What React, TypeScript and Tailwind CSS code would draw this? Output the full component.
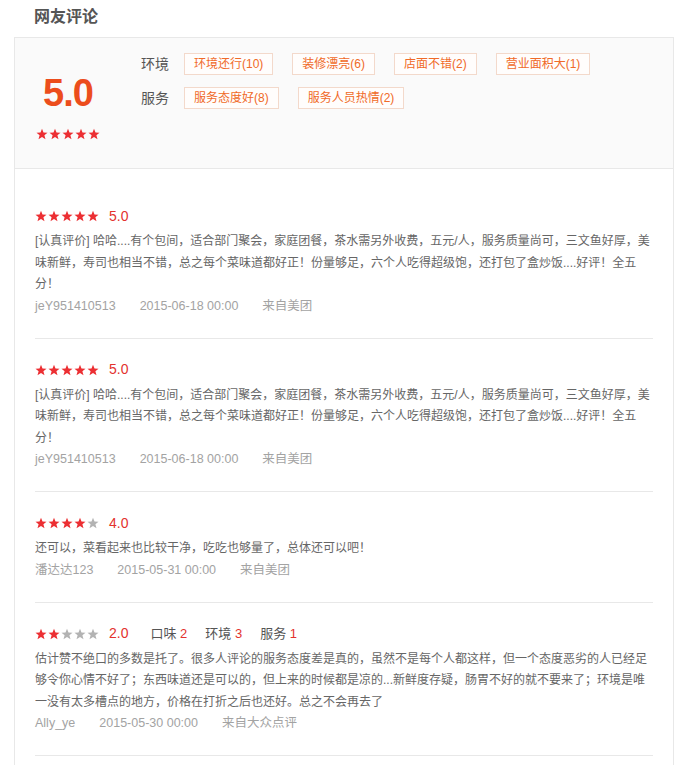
const FONT = '"Liberation Sans", "Noto Sans CJK SC", sans-serif'

type TReview = {
  score: number
  text: string
  user: string
  time: string
  source: string
  dims?: { label: string; value: number }[]
}

const tagRows = [
  { label: "环境", tags: ["环境还行(10)", "装修漂亮(6)", "店面不错(2)", "营业面积大(1)"] },
  { label: "服务", tags: ["服务态度好(8)", "服务人员热情(2)"] },
]

const longText =
  "[认真评价] 哈哈....有个包间，适合部门聚会，家庭团餐，茶水需另外收费，五元/人，服务质量尚可，三文鱼好厚，美味新鲜，寿司也相当不错，总之每个菜味道都好正！份量够足，六个人吃得超级饱，还打包了盒炒饭....好评！全五分！"

const reviews: TReview[] = [
  { score: 5, text: longText, user: "jeY951410513", time: "2015-06-18 00:00", source: "来自美团" },
  { score: 5, text: longText, user: "jeY951410513", time: "2015-06-18 00:00", source: "来自美团" },
  {
    score: 4,
    text: "还可以，菜看起来也比较干净，吃吃也够量了，总体还可以吧！",
    user: "潘达达123",
    time: "2015-05-31 00:00",
    source: "来自美团",
  },
  {
    score: 2,
    text: "估计赞不绝口的多数是托了。很多人评论的服务态度差是真的，虽然不是每个人都这样，但一个态度恶劣的人已经足够令你心情不好了；东西味道还是可以的，但上来的时候都是凉的...新鲜度存疑，肠胃不好的就不要来了；环境是唯一没有太多槽点的地方，价格在打折之后也还好。总之不会再去了",
    user: "Ally_ye",
    time: "2015-05-30 00:00",
    source: "来自大众点评",
    dims: [
      { label: "口味", value: 2 },
      { label: "环境", value: 3 },
      { label: "服务", value: 1 },
    ],
  },
]

const Star = ({ on }: { on: boolean }) => (
  <svg width="12" height="12" viewBox="0 0 24 24" className="shrink-0">
    <polygon
      points="12,1.5 15,9 23,9.3 16.8,14.4 19,22.5 12,17.8 5,22.5 7.2,14.4 1,9.3 9,9"
      fill={on ? "#ec2f33" : "#b3b3b3"}
    />
  </svg>
)

const Stars = ({ score }: { score: number }) => (
  <div className="flex gap-[1px]">
    {[1, 2, 3, 4, 5].map((i) => (
      <Star key={i} on={i <= score} />
    ))}
  </div>
)

const ReviewItem = ({ review }: { review: TReview }) => {
  const { score, text, user, time, source, dims } = review
  return (
    <div className="py-[21px] border-b border-[#e8e8e8]">
      <div className="flex items-center h-5">
        <Stars score={score} />
        <span className="ml-[10px] text-[14px] text-[#e3322e]">{score.toFixed(1)}</span>
        {dims && (
          <div className="flex items-center gap-[18px] ml-[22px] text-[13px] text-[#555]">
            {dims.map((d) => (
              <span key={d.label}>
                {d.label} <span className="text-[#e3322e]">{d.value}</span>
              </span>
            ))}
          </div>
        )}
      </div>
      <p className="mt-[5px] text-[12px] leading-[21.5px] text-[#666]">{text}</p>
      <div className="flex gap-6 text-[12.5px] leading-[21px] text-[#a3a3a3]">
        <span>{user}</span>
        <span>{time}</span>
        <span>{source}</span>
      </div>
    </div>
  )
}

export default function App() {
  return (
    <div className="bg-white min-h-screen px-[14px]" style={{ fontFamily: FONT }}>
      <h2 className="h-[37px] flex items-center pl-5 pb-1 text-[16px] font-bold text-[#555]">
        网友评论
      </h2>
      <div className="w-[660px] border border-[#e8e8e8]">
        <div className="flex h-[131px] bg-[#fafafa] border-b border-[#e8e8e8]">
          <div className="w-[106px] flex flex-col items-center pt-[35px]">
            <span className="text-[38px] leading-[40px] font-bold tracking-[-1px] text-[#ec4d1c]">
              5.0
            </span>
            <div className="mt-[15px]">
              <Stars score={5} />
            </div>
          </div>
          <div className="flex flex-col gap-3 pt-[15px] pl-5">
            {tagRows.map((row) => (
              <div key={row.label} className="flex items-center gap-[15px]">
                <span className="text-[14px] leading-[22px] text-[#555]">{row.label}</span>
                <div className="flex gap-[19px]">
                  {row.tags.map((t) => (
                    <span
                      key={t}
                      className="h-[22px] flex items-center px-[9px] border border-[#f3d9cb] bg-[#fffdfc] text-[12px] text-[#f06a28]"
                    >
                      {t}
                    </span>
                  ))}
                </div>
              </div>
            ))}
          </div>
        </div>
        <div className="px-5 pt-4 pb-6">
          {reviews.map((r, i) => (
            <ReviewItem key={i} review={r} />
          ))}
        </div>
      </div>
    </div>
  )
}
